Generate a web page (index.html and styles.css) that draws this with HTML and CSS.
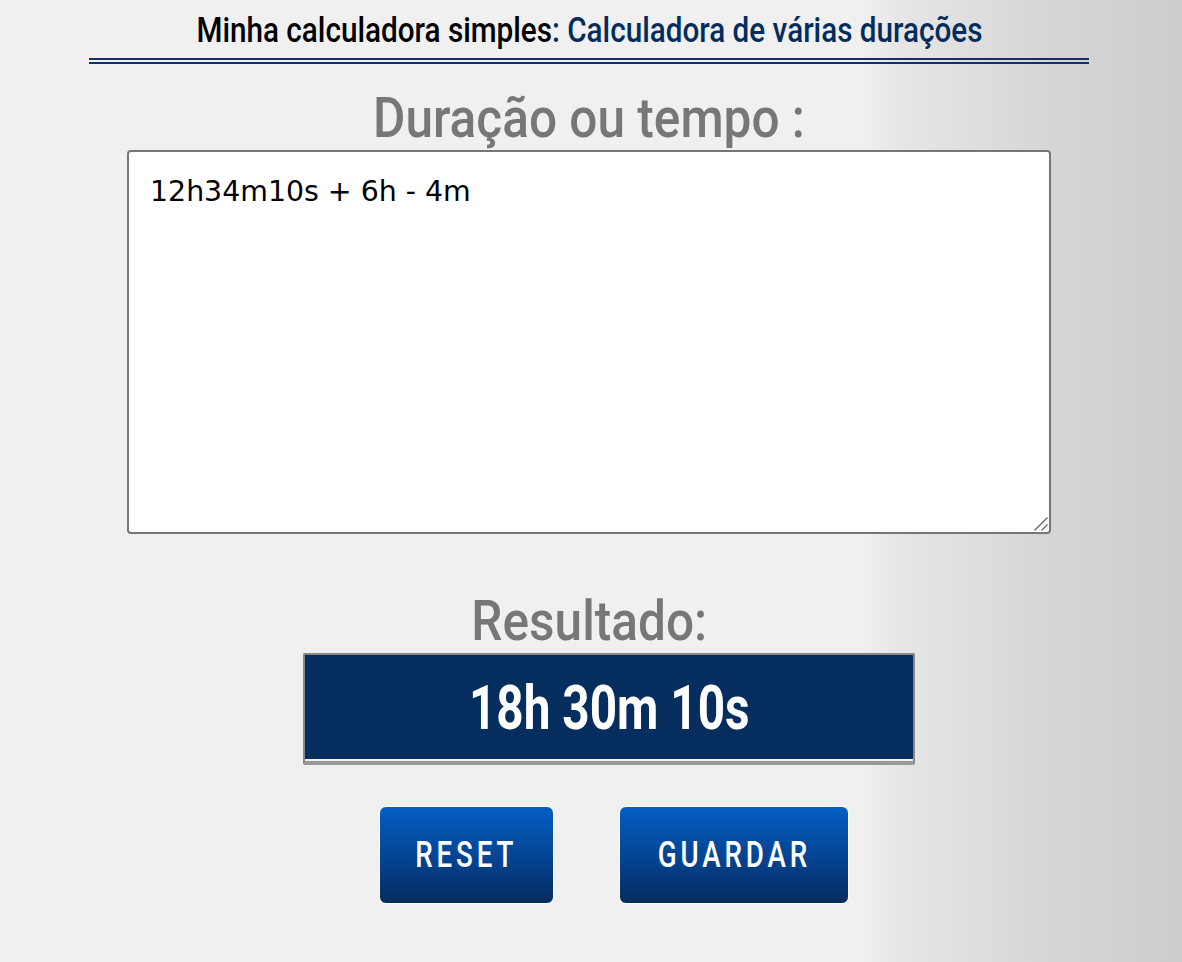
FILE: index.html
```html
<!DOCTYPE html>
<html lang="pt">
    <head>
        <meta charset="UTF-8">
        <title>Calculadora de várias durações</title>
        <link rel="stylesheet" href="styles.css">
    </head>

    <body>
        <div id="wrap">
            <h1 id="page-title"><span class="narrow">Minha calculadora simples<span class="colon">:</span> <a href="#">Calculadora de várias durações</a></span></h1>

            <form id="calc">
                <label class="field-title" for="duration"><span class="narrow">Duração ou tempo :</span></label>
                <div id="duration-box">
                    <textarea id="duration">12h34m10s + 6h - 4m</textarea>
                    <svg id="grip" width="16" height="16" viewBox="0 0 16 16">
                        <path d="M1.5 14.5 L14.5 1.5 M8.5 14.5 L14.5 8.5" stroke="#666" stroke-width="1.3" fill="none"/>
                    </svg>
                </div>

                <div class="field-title result-title"><span class="narrow">Resultado:</span></div>
                <div id="result"><span class="narrow">18h 30m 10s</span></div>

                <div id="buttons">
                    <button type="button" class="btn btn-reset"><span class="narrow">RESET</span></button>
                    <button type="button" class="btn btn-save"><span class="narrow">GUARDAR</span></button>
                </div>
            </form>
        </div>
    </body>
</html>
```

FILE: styles.css
```css
body {
    margin: 0;
    padding: 0 4px 0 0;
    height: 962px;
    box-sizing: border-box;
    overflow: hidden;
    background: linear-gradient(to right, #f0f0f0 0, #f0f0f0 860px, #e6e6e6 900px, #d6d6d6 1050px, #cccccc 1182px);
    font-family: "Roboto", sans-serif;
}

#wrap {
    width: 1000px;
    margin: 0 auto;
}

/* the original display font is condensed, roboto gets squeezed to fit */
.narrow {
    display: inline-block;
    white-space: nowrap;
}

#page-title {
    margin: 0;
    height: 58px;
    border-bottom: 6px double #12335f;
    font-size: 35px;
    line-height: 62px;
    font-weight: 500;
    text-align: center;
    color: #000;
    white-space: nowrap;
}

#page-title .narrow {
    transform: scaleX(0.848);
}

#page-title a {
    color: #042c5c;
    text-decoration: none;
}

.colon {
    color: #042c5c;
}

#calc {
    display: flex;
    flex-direction: column;
    align-items: center;
}

.field-title {
    display: block;
    height: 86px;
    font-size: 56px;
    line-height: 108px;
    font-weight: 500;
    color: #777;
    white-space: nowrap;
}

.field-title .narrow {
    transform: scaleX(0.885);
}

#duration-box {
    position: relative;
    width: 924px;
    height: 384px;
}

#duration {
    display: block;
    width: 100%;
    height: 100%;
    box-sizing: border-box;
    padding: 24px 21px;
    border: 2px solid #767676;
    border-radius: 4px;
    background: #fff;
    font-family: "DejaVu Sans", Verdana, sans-serif;
    font-size: 28.4px;
    line-height: 32px;
    color: #000;
    outline: none;
    resize: none;
}

#grip {
    position: absolute;
    right: 2px;
    bottom: 2px;
}

.result-title {
    height: 119px;
    line-height: 175px;
}

#result {
    width: 612px;
    height: 112px;
    margin-left: 40px;
    box-sizing: border-box;
    border: 2px solid #888;
    border-bottom: 4px solid #999;
    border-radius: 2px;
    background: #052d5e;
    box-shadow: inset 0 -2px 0 #f0f0f0;
    color: #fff;
    font-size: 62px;
    font-weight: bold;
    line-height: 106px;
    text-align: center;
}

#result .narrow {
    transform: scaleX(0.77);
}

#buttons {
    display: flex;
    gap: 65px;
    margin-top: 41px;
    margin-left: 50px;
}

.btn {
    height: 98px;
    border: 1px solid #fff;
    border-radius: 7px;
    background: linear-gradient(to bottom, #045ec4 0, #04408c 60%, #042c5c 100%);
    color: #fff;
    font-family: inherit;
    font-size: 36px;
    font-weight: 500;
    letter-spacing: 5px;
    padding: 0;
}

.btn .narrow {
    transform: scaleX(0.77);
}

.btn-reset {
    width: 175px;
}

.btn-save {
    width: 230px;
}
```
